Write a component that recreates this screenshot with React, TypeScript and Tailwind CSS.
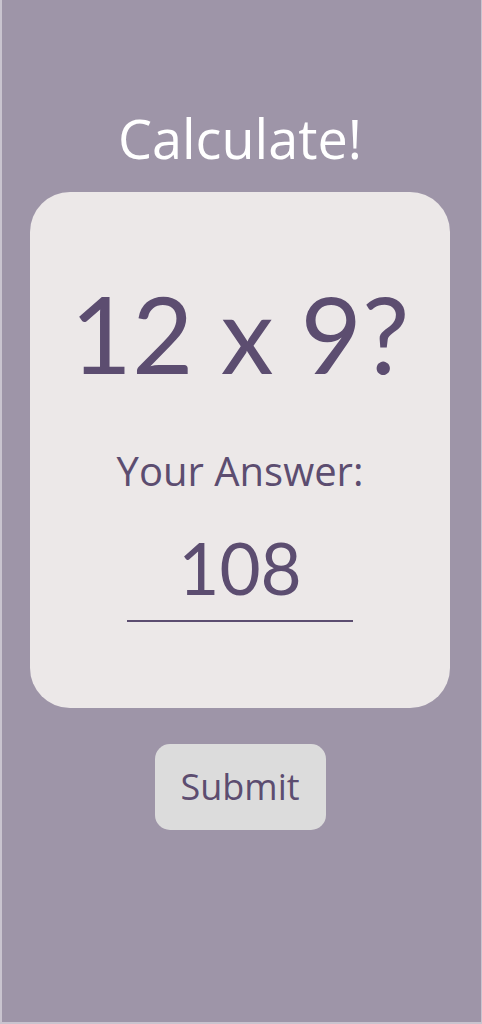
export default function App() {
  return (
    <div className="w-[482px] h-[1024px] bg-[#9e95a8] border-l-2 border-b-2 border-r border-[#c9c4cf] pr-[3px] flex flex-col items-center font-['Open_Sans',sans-serif]">
      <h1 className="mt-[106px] text-[54px] leading-[64px] text-white">Calculate!</h1>

      <div className="mt-[22px] w-[420px] h-[516px] rounded-[40px] bg-[#ece8e8] flex flex-col items-center">
        <div className="mt-[81px] font-['Lato',sans-serif] text-[106px] leading-[120px] text-[#5c4d70]">12 x 9?</div>
        <div className="mt-[54px] text-[40px] leading-[48px] text-[#5c4d70]">Your Answer:</div>
        <div className="mt-[33px] w-[226px] pb-[12px] border-b-2 border-[#5c4d70] text-center font-['Lato',sans-serif] text-[71px] leading-[80px] text-[#5c4d70]">108</div>
      </div>

      <button className="mt-[36px] w-[171px] h-[86px] rounded-[15px] bg-[#dcdcdc] text-[36px] text-[#5c4d70]">Submit</button>
    </div>
  );
}
